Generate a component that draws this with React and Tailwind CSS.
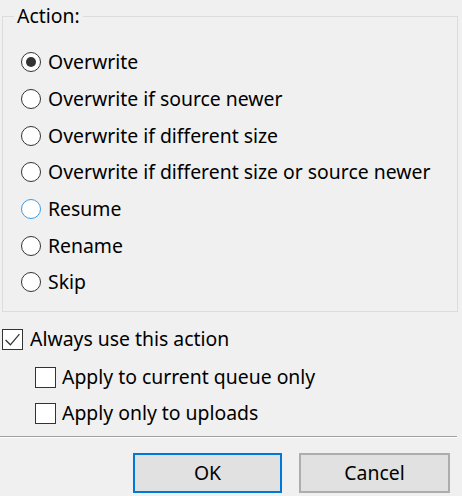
import React from 'react';

const options = [
  'Overwrite',
  'Overwrite if source newer',
  'Overwrite if different size',
  'Overwrite if different size or source newer',
  'Resume',
  'Rename',
  'Skip',
];

const Radio = ({ checked, hot }) => (
  <span
    className={`flex h-[20px] w-[20px] shrink-0 items-center justify-center rounded-full border-[1.5px] bg-white ${
      hot ? 'border-[#3d9be6]' : 'border-[#333333]'
    }`}
  >
    {checked && <span className="h-[10px] w-[10px] rounded-full bg-[#333333]" />}
  </span>
);

const Checkbox = ({ checked }) => (
  <span className="flex h-[21px] w-[21px] shrink-0 items-center justify-center border-[1.5px] border-[#333333] bg-white">
    {checked && (
      <svg width="17" height="17" viewBox="0 0 16 16" fill="none">
        <path d="M1.5 8.5 L6 13 L14.5 3" stroke="#333333" strokeWidth="1.2" />
      </svg>
    )}
  </span>
);

const App = () => {
  return (
    <div className="h-[496px] w-[462px] overflow-hidden bg-[#f0f0f0] font-['Noto_Sans',sans-serif] text-[19.4px] text-black">
      <div className="px-[2px] pt-[4px]">
        <fieldset className="h-[308px] w-[456px] border border-[#dcdcdc]">
          <legend className="ml-[11px] px-[3px] leading-[24px]">Action:</legend>
          <div className="mt-[16px] flex flex-col pl-[18px]">
            {options.map((label, i) => (
              <div key={label} className="flex h-[36.67px] items-center gap-[7px]">
                <Radio checked={i === 0} hot={label === 'Resume'} />
                <span className="leading-[24px]">{label}</span>
              </div>
            ))}
          </div>
        </fieldset>
      </div>

      <div className="mt-[16px] flex flex-col">
        <div className="flex h-[22px] items-center gap-[7px] pl-[2px]">
          <Checkbox checked />
          <span className="leading-[24px]">Always use this action</span>
        </div>
        <div className="mt-[16px] flex h-[22px] items-center gap-[6px] pl-[35px]">
          <Checkbox />
          <span className="leading-[24px]">Apply to current queue only</span>
        </div>
        <div className="mt-[14px] flex h-[22px] items-center gap-[6px] pl-[35px]">
          <Checkbox />
          <span className="leading-[24px]">Apply only to uploads</span>
        </div>
      </div>

      <div className="mt-[12px] h-[2px] w-[457px] border-t border-[#a0a0a0] border-b-[#ffffff] border-b" />

      <div className="mt-[15px] flex gap-[17px] pl-[133px]">
        <button className="h-[40px] w-[149px] border-2 border-[#0078d7] bg-[#e1e1e1] leading-[24px]">OK</button>
        <button className="h-[40px] w-[151px] border-2 border-[#adadad] bg-[#e1e1e1] leading-[24px]">Cancel</button>
      </div>
    </div>
  );
};

export default App;
